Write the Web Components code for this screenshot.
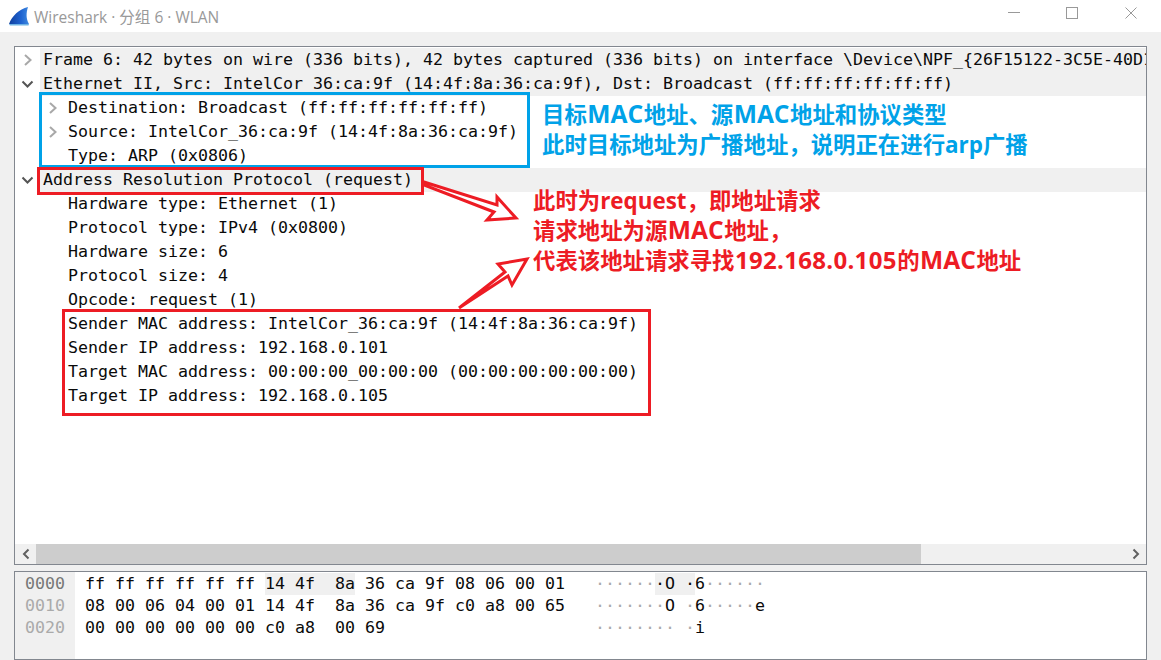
<!DOCTYPE html>
<html>
<head>
<meta charset="utf-8">
<style>
html, body { margin: 0; padding: 0; }
body { width: 1161px; height: 660px; overflow: hidden; background: #f0f0f0; }
</style>
</head>
<body>
<ws-window>
  <ws-titlebar slot="title">Wireshark · 分组 6 · WLAN</ws-titlebar>
  <ws-tree slot="tree">
    <ws-row arrow="right" level="0" shade>Frame 6: 42 bytes on wire (336 bits), 42 bytes captured (336 bits) on interface \Device\NPF_{26F15122-3C5E-40D1</ws-row>
    <ws-row arrow="down" level="0" shade>Ethernet II, Src: IntelCor 36:ca:9f (14:4f:8a:36:ca:9f), Dst: Broadcast (ff:ff:ff:ff:ff:ff)</ws-row>
    <ws-row arrow="right" level="1">Destination: Broadcast (ff:ff:ff:ff:ff:ff)</ws-row>
    <ws-row arrow="right" level="1">Source: IntelCor_36:ca:9f (14:4f:8a:36:ca:9f)</ws-row>
    <ws-row level="1">Type: ARP (0x0806)</ws-row>
    <ws-row arrow="down" level="0" shade>Address Resolution Protocol (request)</ws-row>
    <ws-row level="1">Hardware type: Ethernet (1)</ws-row>
    <ws-row level="1">Protocol type: IPv4 (0x0800)</ws-row>
    <ws-row level="1">Hardware size: 6</ws-row>
    <ws-row level="1">Protocol size: 4</ws-row>
    <ws-row level="1">Opcode: request (1)</ws-row>
    <ws-row level="1">Sender MAC address: IntelCor_36:ca:9f (14:4f:8a:36:ca:9f)</ws-row>
    <ws-row level="1">Sender IP address: 192.168.0.101</ws-row>
    <ws-row level="1">Target MAC address: 00:00:00_00:00:00 (00:00:00:00:00:00)</ws-row>
    <ws-row level="1">Target IP address: 192.168.0.105</ws-row>
  </ws-tree>
  <ws-hex slot="hex"></ws-hex>
  <ws-notes slot="notes"></ws-notes>
</ws-window>

<script>
const MONO = '"DejaVu Sans Mono", "Liberation Mono", monospace';

class WsWindow extends HTMLElement {
  constructor() {
    super();
    this.attachShadow({ mode: 'open' });
    this.shadowRoot.innerHTML = `
      <style>
        :host { display: block; position: relative; width: 1161px; height: 660px; background: #f0f0f0; overflow: hidden; }
        .body { display: flex; flex-direction: column; gap: 6px; padding: 14px 14px 0 14px; }
      </style>
      <slot name="title"></slot>
      <div class="body">
        <slot name="tree"></slot>
        <slot name="hex"></slot>
      </div>
      <slot name="notes"></slot>
    `;
  }
}
customElements.define('ws-window', WsWindow);

class WsTitlebar extends HTMLElement {
  constructor() {
    super();
    this.attachShadow({ mode: 'open' });
    this.shadowRoot.innerHTML = `
      <style>
        :host { display: flex; align-items: center; height: 32px; background: #fff; color: #999; padding-right: 1px; box-sizing: border-box;
          font: 15.5px "Open Sans", "Noto Sans CJK SC", sans-serif; }
        .logo { margin-left: 9px; margin-right: 5px; display: block; flex: none; }
        .title { flex: 1; }
        .btn { width: 58.5px; height: 26px; align-self: flex-start; display: flex; align-items: center; justify-content: center; }
      </style>
      <svg class="logo" width="20" height="20" viewBox="0 0 20 20">
        <defs>
          <linearGradient id="fin" x1="0" y1="0" x2="1" y2="0">
            <stop offset="0" stop-color="#0f3f9e"/>
            <stop offset=".6" stop-color="#1f63d0"/>
            <stop offset="1" stop-color="#3f8ae0"/>
          </linearGradient>
        </defs>
        <path d="M0 18 C3 10 10 3 19 1 C17 7 17 13 20 18 Z" fill="url(#fin)"/>
        <path d="M0 18 H20 L19.5 19.5 H1 Z" fill="#6fb3e4"/>
      </svg>
      <span class="title"><slot></slot></span>
      <div class="btn"><svg width="12" height="12"><path d="M0 5.5H12" stroke="#999" fill="none"/></svg></div>
      <div class="btn"><svg width="12" height="12"><rect x=".5" y=".5" width="11" height="11" stroke="#999" fill="none"/></svg></div>
      <div class="btn"><svg width="12" height="12"><path d="M.5 .5L11.5 11.5M11.5 .5L.5 11.5" stroke="#999" fill="none"/></svg></div>
    `;
  }
}
customElements.define('ws-titlebar', WsTitlebar);

class WsTree extends HTMLElement {
  constructor() {
    super();
    this.attachShadow({ mode: 'open' });
    this.shadowRoot.innerHTML = `
      <style>
        :host { display: flex; flex-direction: column; height: 519px; box-sizing: border-box; border: 1px solid #82878f; background: #fff; }
        .rows { flex: 1; overflow: hidden; padding-top: 1px; }
        .bar { height: 20px; display: flex; background: #f0f0f0; align-items: center; }
        .end { width: 21px; height: 20px; display: flex; align-items: center; justify-content: center; }
        .thumb { width: 885px; height: 20px; background: #cdcdcd; }
        .rest { flex: 1; }
      </style>
      <div class="rows"><slot></slot></div>
      <div class="bar">
        <div class="end"><svg width="8" height="12"><path d="M6.5 1.5L2 6l4.5 4.5" stroke="#606060" stroke-width="2" fill="none"/></svg></div>
        <div class="thumb"></div><div class="rest"></div>
        <div class="end"><svg width="8" height="12"><path d="M1.5 1.5L6 6l-4.5 4.5" stroke="#606060" stroke-width="2" fill="none"/></svg></div>
      </div>
    `;
  }
}
customElements.define('ws-tree', WsTree);

class WsRow extends HTMLElement {
  constructor() {
    super();
    this.attachShadow({ mode: 'open' });
    const arrow = this.getAttribute('arrow');
    const level = +(this.getAttribute('level') || 0);
    let icon = '';
    if (arrow === 'right') icon = '<svg width="10" height="12"><path d="M2 1L7.5 6 2 11" stroke="#a8a8a8" stroke-width="2" fill="none"/></svg>';
    if (arrow === 'down') icon = '<svg width="13" height="9"><path d="M1.5 1.5L6.5 6.5 11.5 1.5" stroke="#555" stroke-width="2" fill="none"/></svg>';
    this.shadowRoot.innerHTML = `
      <style>
        :host { display: block; height: 24px; }
        :host([shade]) .label { background: #f0f0f0; }
        .row { display: flex; align-items: center; height: 24px; overflow: hidden;
          font: 16.63px/24px ${MONO}; color: #0a0a0a; padding-left: ${level * 25}px; }
        .tw { flex: none; width: 25px; display: flex; justify-content: center; }
        .label { flex: 1; min-width: 0; height: 24px; padding-left: 3px; white-space: pre; overflow: hidden; }
      </style>
      <div class="row"><span class="tw">${icon}</span><span class="label"><slot></slot></span></div>
    `;
  }
}
customElements.define('ws-row', WsRow);

class WsHex extends HTMLElement {
  constructor() {
    super();
    this.attachShadow({ mode: 'open' });
    const dot = (s) => s.replace(/·/g, '<i>·</i>');
    const lines = [
      { off: '0000', cur: true, a: 'ff ff ff ff ff ff ', b: '14 4f  8a', c: ' 36 ca 9f 08 06 00 01',
        left: dot('······'), mid: '·O ·', right: '6' + dot('······') },
      { off: '0010', a: '08 00 06 04 00 01 ', b: '14 4f  8a', c: ' 36 ca 9f c0 a8 00 65',
        left: dot('······'), mid: dot('·O ·'), right: '6' + dot('·····') + 'e' },
      { off: '0020', a: '00 00 00 00 00 00 ', b: 'c0 a8  00', c: ' 69',
        left: dot('······'), mid: dot('·· ·'), right: 'i' },
    ];
    const rows = lines.map(l => `<div class="line"><span class="off ${l.cur ? 'cur' : ''}">${l.off}</span><span class="bytes">${l.a}<span class="${l.cur ? 'hl' : ''}">${l.b}</span>${l.c}</span><span class="asc">${l.left}<span class="${l.cur ? 'hl' : ''}">${l.mid}</span>${l.right}</span></div>`).join('');
    this.shadowRoot.innerHTML = `
      <style>
        :host { display: block; height: 89px; box-sizing: border-box; border: 1px solid #82878f; background: #fff; }
        .wrap { background: linear-gradient(90deg, #f0f0f0 60px, #fff 60px); height: 87px; box-sizing: border-box; padding-top: 1px; font: 16.63px/22px ${MONO}; color: #0a0a0a; }
        .line { display: flex; height: 22px; white-space: pre; }
        .off { width: 70px; padding-left: 10px; box-sizing: border-box; color: #aaa; }
        .off.cur { color: #777; }
        .bytes { width: 510px; }
        .asc i { font-style: normal; color: #aaa; }
        .hl { background: #f0f0f0; display: inline-block; }
      </style>
      <div class="wrap">${rows}</div>
    `;
  }
}
customElements.define('ws-hex', WsHex);

class WsNotes extends HTMLElement {
  constructor() {
    super();
    this.attachShadow({ mode: 'open' });
    this.shadowRoot.innerHTML = `
      <style>
        :host { display: block; position: absolute; inset: 0; pointer-events: none; }
        .box { position: absolute; box-sizing: border-box; border: 3px solid #ed1c24; }
        .blue { border-color: #00a2e8; }
        .txt { position: absolute; white-space: pre; font: bold 22.4px/30px "Open Sans", "Noto Sans CJK SC", sans-serif; }
        .m { font-size: 24.6px; line-height: 1; margin: 0 .5px; }
        .n { font-size: 24px; line-height: 1; letter-spacing: .3px; margin: 0 .5px; }
        svg { position: absolute; left: 0; top: 0; }
      </style>
      <div class="box blue" style="left:39px;top:92px;width:491px;height:76px"></div>
      <div class="box" style="left:37px;top:167px;width:387px;height:28px"></div>
      <div class="box" style="left:62px;top:309px;width:589px;height:107px"></div>
      <div class="txt" style="left:542px;top:100px;color:#00a2e8">目标<span class="m">MAC</span>地址、源<span class="m">MAC</span>地址和协议类型
此时目标地址为广播地址，说明正在进行arp广播</div>
      <div class="txt" style="left:533px;top:186px;color:#ed1c24">此时为request，即地址请求
请求地址为源<span class="m">MAC</span>地址，
代表该地址请求寻找<span class="n">192.168.0.105</span>的<span class="m">MAC</span>地址</div>
      <svg width="1161" height="660">
        <path d="M424 182L497 205L497 197L516 218L487 220L494 212L424 185Z" fill="#fff" stroke="#ed1c24" stroke-width="3" stroke-linejoin="miter"/>
        <path d="M459 308L505 272L498 264L527 259L512 285L508 276Z" fill="#fff" stroke="#ed1c24" stroke-width="3"/>
      </svg>
    `;
  }
}
customElements.define('ws-notes', WsNotes);
</script>
</body>
</html>
